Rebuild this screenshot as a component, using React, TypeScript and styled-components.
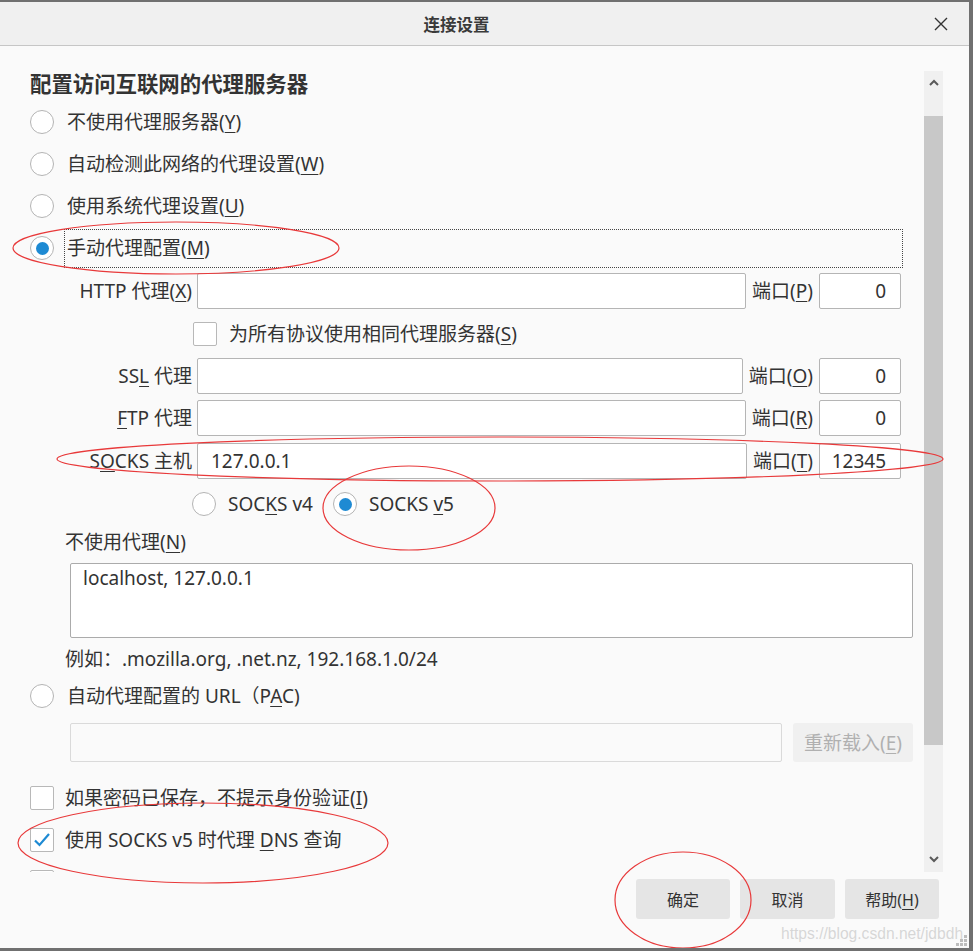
import * as React from "react";
import styled, { createGlobalStyle } from "styled-components";

const GlobalStyle = createGlobalStyle`
  html, body {
    margin: 0;
    padding: 0;
    background: #fafafa;
  }
  body {
    font-family: "Noto Sans", "Noto Sans CJK SC", sans-serif;
    color: #333;
  }
`;

const Window = styled.div`
  position: relative;
  width: 969px;
  height: 946px;
  border-top: 2px solid #707070;
  border-right: 4px solid #707070;
  border-bottom: 3px solid #707070;
  background: #fafafa;
  display: flex;
  flex-direction: column;
  overflow: hidden;
`;

const TitleBar = styled.div`
  height: 43px;
  flex-shrink: 0;
  display: flex;
  align-items: center;
  background: #f0f0f0;
  border-bottom: 1px solid #c6c6c6;
`;

const Title = styled.div`
  flex: 1;
  text-align: center;
  font-size: 16.5px;
  font-weight: bold;
  color: #3a3a3a;
`;

const CloseButton = styled.div`
  width: 56px;
  height: 43px;
  display: flex;
  align-items: center;
  justify-content: center;
`;

const Main = styled.div`
  flex: 1;
  display: flex;
  flex-direction: column;
`;

const ScrollRow = styled.div`
  height: 826px;
  display: flex;
  padding-right: 26px;
`;

const Content = styled.div`
  flex: 1;
  overflow: hidden;
  padding: 23px 11px 0 30px;
  display: flex;
  flex-direction: column;
  font-size: 19px;
  line-height: 26px;
`;

const Scrollbar = styled.div`
  width: 19px;
  margin-top: 25px;
  display: flex;
  flex-direction: column;
  background: #f0f0f0;
`;

const ScrollArrow = styled.div<{ $bottom?: boolean }>`
  height: ${(p) => (p.$bottom ? 127 : 45)}px;
  display: flex;
  justify-content: center;
  align-items: ${(p) => (p.$bottom ? "flex-end" : "flex-start")};
  padding: ${(p) => (p.$bottom ? "0 0 9px" : "8px 0 0")};
  box-sizing: border-box;
`;

const ScrollThumb = styled.div`
  height: 629px;
  background: #c8c8c8;
`;

const Heading = styled.div`
  font-size: 21.4px;
  font-weight: bold;
  height: 30px;
  line-height: 30px;
  margin-bottom: 2px;
  flex-shrink: 0;
`;

const OptionRow = styled.div<{ $height?: number; $indent?: number; $mt?: number }>`
  display: flex;
  align-items: center;
  height: ${(p) => p.$height ?? 42}px;
  padding-left: ${(p) => p.$indent ?? 0}px;
  margin-top: ${(p) => p.$mt ?? 0}px;
  flex-shrink: 0;
`;

const RadioCircle = styled.span<{ $checked?: boolean }>`
  width: 24px;
  height: 24px;
  box-sizing: border-box;
  border: 1px solid #b4b4b4;
  border-radius: 50%;
  background: #fff;
  flex-shrink: 0;
  display: flex;
  align-items: center;
  justify-content: center;
  &::after {
    content: "";
    width: 13px;
    height: 13px;
    border-radius: 50%;
    background: ${(p) => (p.$checked ? "#1e8ad3" : "transparent")};
  }
`;

const CheckBox = styled.span`
  width: 24px;
  height: 24px;
  box-sizing: border-box;
  border: 1px solid #b8b8b8;
  border-radius: 2px;
  background: #fff;
  flex-shrink: 0;
  display: flex;
  align-items: center;
  justify-content: center;
`;

const OptionText = styled.span<{ $gap?: number; $focused?: boolean }>`
  margin-left: ${(p) => p.$gap ?? 11}px;
  padding: 0 2px;
  white-space: nowrap;
  ${(p) =>
    p.$focused &&
    `
    flex: 1;
    height: 37px;
    display: flex;
    align-items: center;
    outline: 1px dotted #444;
    margin-right: 11px;
  `}
`;

const Key = styled.u`
  text-decoration-thickness: 1px;
  text-underline-offset: 3px;
`;

const ProxyRow = styled.div<{ $mt?: number }>`
  display: flex;
  align-items: center;
  height: 36px;
  margin-top: ${(p) => p.$mt ?? 0}px;
  margin-right: 12px;
  flex-shrink: 0;
`;

const ProxyLabel = styled.span`
  width: 162px;
  padding-right: 5px;
  text-align: right;
  white-space: nowrap;
  flex-shrink: 0;
`;

const PortLabel = styled.span`
  margin: 0 6px;
  white-space: nowrap;
`;

const TextInput = styled.input<{ $port?: boolean; $disabled?: boolean }>`
  box-sizing: border-box;
  height: 100%;
  ${(p) => (p.$port ? "width: 82px; flex-shrink: 0;" : "flex: 1; min-width: 0;")}
  border: 1px solid ${(p) => (p.$disabled ? "#dadada" : "#b5b5b5")};
  border-radius: 2px;
  background: ${(p) => (p.$disabled ? "#fafafa" : "#fff")};
  font: inherit;
  font-size: 19px;
  color: #333;
  padding: ${(p) => (p.$port ? "0 14px 0 4px" : "0 13px")};
  text-align: ${(p) => (p.$port ? "right" : "left")};
  outline: none;
`;

const SubLabel = styled.div<{ $mt?: number }>`
  padding-left: 35px;
  margin-top: ${(p) => p.$mt ?? 0}px;
  flex-shrink: 0;
`;

const NoProxyBox = styled.textarea`
  box-sizing: border-box;
  margin: 8px 0 0 40px;
  height: 75px;
  flex-shrink: 0;
  border: 1px solid #ababab;
  border-radius: 2px;
  background: #fff;
  font: inherit;
  font-size: 19px;
  line-height: 26px;
  color: #333;
  padding: 1px 12px;
  resize: none;
  outline: none;
`;

const VersionOption = styled.div`
  display: flex;
  align-items: center;
  width: 141px;
`;

const PacRow = styled.div`
  display: flex;
  gap: 11px;
  height: 39px;
  margin: 3px 0 0 40px;
  flex-shrink: 0;
`;

const ReloadButton = styled.div`
  width: 120px;
  border-radius: 3px;
  background: #f0f0f0;
  color: #b0b0b0;
  display: flex;
  align-items: center;
  justify-content: center;
  font-size: 19px;
`;

const Footer = styled.div`
  display: flex;
  justify-content: flex-end;
  gap: 10px;
  padding: 7px 30px 0 0;
`;

const DialogButton = styled.div<{ $w: number }>`
  width: ${(p) => p.$w}px;
  height: 40px;
  border-radius: 3px;
  background: #e5e5e5;
  display: flex;
  align-items: center;
  justify-content: center;
  font-size: 16px;
  color: #333;
`;

const Watermark = styled.div`
  position: absolute;
  left: 781px;
  top: 920px;
  font-family: "Liberation Sans", Arial, sans-serif;
  font-size: 15.6px;
  line-height: 24px;
  color: rgba(190, 190, 190, 0.6);
  white-space: nowrap;
`;

const Grip = styled.svg`
  position: absolute;
  right: 1px;
  bottom: 1px;
`;

const Annotations = styled.svg`
  position: absolute;
  left: 0;
  top: -2px;
  pointer-events: none;
`;

const Chevron = ({ up }: { up?: boolean }) => (
  <svg width="10" height="7" viewBox="0 0 10 7">
    <path
      d={up ? "M1 6 L5 2 L9 6" : "M1 1 L5 5 L9 1"}
      fill="none"
      stroke="#5a5a5a"
      strokeWidth="2"
    />
  </svg>
);

const Check = () => (
  <svg width="18" height="16" viewBox="0 0 18 16">
    <path d="M2 8.5 L6.5 13 L16 2" fill="none" stroke="#1e8ad3" strokeWidth="2.2" />
  </svg>
);

type ProxyDef = { label: React.ReactNode; port: React.ReactNode; host: string; portValue: string; mt: number };

const proxies: ProxyDef[] = [
  { label: <>HTTP 代理(<Key>X</Key>)</>, port: <>端口(<Key>P</Key>)</>, host: "", portValue: "0", mt: 4 },
  { label: <>SS<Key>L</Key> 代理</>, port: <>端口(<Key>O</Key>)</>, host: "", portValue: "0", mt: 0 },
  { label: <><Key>F</Key>TP 代理</>, port: <>端口(<Key>R</Key>)</>, host: "", portValue: "0", mt: 6 },
  { label: <>S<Key>O</Key>CKS 主机</>, port: <>端口(<Key>T</Key>)</>, host: "127.0.0.1", portValue: "12345", mt: 7 },
];

const ProxyLine = ({ p }: { p: ProxyDef }) => (
  <ProxyRow $mt={p.mt}>
    <ProxyLabel>{p.label}</ProxyLabel>
    <TextInput readOnly value={p.host} />
    <PortLabel>{p.port}</PortLabel>
    <TextInput $port readOnly value={p.portValue} />
  </ProxyRow>
);

export default function App() {
  return (
    <>
      <GlobalStyle />
      <Window>
        <TitleBar>
          <Title>连接设置</Title>
          <CloseButton>
            <svg width="14" height="14" viewBox="0 0 14 14">
              <path d="M1 1 L13 13 M13 1 L1 13" stroke="#333" strokeWidth="1.4" />
            </svg>
          </CloseButton>
        </TitleBar>

        <Main>
          <ScrollRow>
            <Content>
              <Heading>配置访问互联网的代理服务器</Heading>
              <OptionRow>
                <RadioCircle />
                <OptionText>不使用代理服务器(<Key>Y</Key>)</OptionText>
              </OptionRow>
              <OptionRow>
                <RadioCircle />
                <OptionText>自动检测此网络的代理设置(<Key>W</Key>)</OptionText>
              </OptionRow>
              <OptionRow>
                <RadioCircle />
                <OptionText>使用系统代理设置(<Key>U</Key>)</OptionText>
              </OptionRow>
              <OptionRow>
                <RadioCircle $checked />
                <OptionText $focused>手动代理配置(<Key>M</Key>)</OptionText>
              </OptionRow>

              <ProxyLine p={proxies[0]} />
              <OptionRow $height={49} $indent={163}>
                <CheckBox />
                <OptionText $gap={10}>为所有协议使用相同代理服务器(<Key>S</Key>)</OptionText>
              </OptionRow>
              {proxies.slice(1).map((p, i) => (
                <ProxyLine key={i} p={p} />
              ))}

              <OptionRow $height={50} $indent={162}>
                <VersionOption>
                  <RadioCircle />
                  <OptionText $gap={10}>SOC<Key>K</Key>S v4</OptionText>
                </VersionOption>
                <RadioCircle $checked />
                <OptionText $gap={10}>SOCKS <Key>v</Key>5</OptionText>
              </OptionRow>

              <SubLabel>不使用代理(<Key>N</Key>)</SubLabel>
              <NoProxyBox readOnly value="localhost, 127.0.0.1" />
              <SubLabel $mt={8}>例如：.mozilla.org, .net.nz, 192.168.1.0/24</SubLabel>

              <OptionRow $height={48}>
                <RadioCircle />
                <OptionText>自动代理配置的 URL（P<Key>A</Key>C)</OptionText>
              </OptionRow>
              <PacRow>
                <TextInput $disabled readOnly value="" />
                <ReloadButton>重新载入(<Key>E</Key>)</ReloadButton>
              </PacRow>

              <OptionRow $mt={15}>
                <CheckBox />
                <OptionText $gap={9}>如果密码已保存，不提示身份验证(<Key>I</Key>)</OptionText>
              </OptionRow>
              <OptionRow>
                <CheckBox>
                  <Check />
                </CheckBox>
                <OptionText $gap={9}>使用 SOCKS v5 时代理 <Key>D</Key>NS 查询</OptionText>
              </OptionRow>
              <OptionRow>
                <CheckBox />
              </OptionRow>
            </Content>

            <Scrollbar>
              <ScrollArrow>
                <Chevron up />
              </ScrollArrow>
              <ScrollThumb />
              <ScrollArrow $bottom>
                <Chevron />
              </ScrollArrow>
            </Scrollbar>
          </ScrollRow>

          <Footer>
            <DialogButton $w={94}>确定</DialogButton>
            <DialogButton $w={95}>取消</DialogButton>
            <DialogButton $w={94}>
              <span>
                帮助(<Key>H</Key>)
              </span>
            </DialogButton>
          </Footer>
        </Main>

        <Watermark>https://blog.csdn.net/jdbdh</Watermark>
        <Grip width="12" height="12" viewBox="0 0 12 12">
          {[
            [8, 0],
            [4, 4],
            [8, 4],
            [0, 8],
            [4, 8],
            [8, 8],
          ].map(([x, y], i) => (
            <rect key={i} x={x} y={y} width="3" height="3" fill="#bdbdbd" />
          ))}
        </Grip>

        <Annotations width="973" height="951" viewBox="0 0 973 951">
          <g fill="none" stroke="#e8393a" strokeWidth="1.2">
            <ellipse cx="176" cy="248" rx="163" ry="26" />
            <ellipse cx="500" cy="459" rx="443" ry="22" />
            <ellipse cx="409" cy="508" rx="86" ry="42" />
            <ellipse cx="203" cy="843" rx="185" ry="40" />
            <ellipse cx="683" cy="900" rx="68" ry="48" />
          </g>
        </Annotations>
      </Window>
    </>
  );
}
